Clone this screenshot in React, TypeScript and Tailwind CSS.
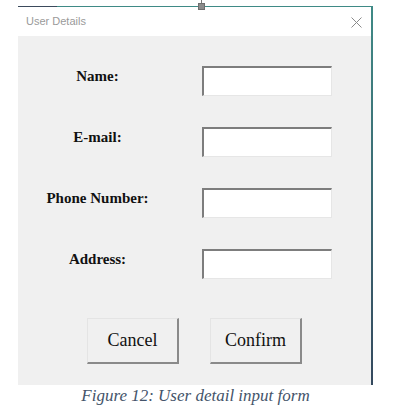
const fields = ["Name:", "E-mail:", "Phone Number:", "Address:"];

const serif = { fontFamily: '"Liberation Serif", "Times New Roman", serif' };

export default function App() {
  return (
    <div className="relative h-[411px] w-[420px] bg-white pl-[18px] pt-[6px]">
      {/* selection handle over the top edge */}
      <div className="absolute left-[201px] top-0 h-[4px] w-px bg-[#7a7a7a]" />
      <div className="absolute left-[198px] top-[3px] h-[7px] w-[7px] border border-[#6e6e6e] bg-[#8c8c8c]" />

      <div className="flex w-[355px] flex-col">
        <div className="flex h-px">
          <div className="w-[39px] bg-[#3b4a5c]" />
          <div className="flex-1 bg-[#3f8a86]" />
        </div>
        <div className="flex">
          <div className="flex flex-1 flex-col">
            <div className="flex h-[29px] items-center justify-between bg-white pl-[8px] pr-[9px]">
              <span className="text-[11px] text-[#9a9a9a]" style={{ fontFamily: '"Liberation Sans", Arial, sans-serif' }}>
                User Details
              </span>
              <svg width="11" height="11" viewBox="0 0 11 11" className="mt-px">
                <path d="M0.5 0.5 L10.5 10.5 M10.5 0.5 L0.5 10.5" stroke="#8a8a8a" strokeWidth="1" />
              </svg>
            </div>

            <div className="flex h-[349px] flex-col bg-[#f0f0f0]" style={serif}>
              <div className="mt-[30px] flex flex-col gap-[31px]">
                {fields.map((label) => (
                  <div key={label} className="flex items-center">
                    <div className="w-[159px] pb-[10px] text-center text-[15px] font-bold leading-none text-[#111]">
                      {label}
                    </div>
                    <div className="ml-[25px] h-[30px] w-[130px] border-l-2 border-t-2 border-b border-r border-b-[#e6e6e6] border-l-[#7d7d7d] border-r-[#e6e6e6] border-t-[#7d7d7d] bg-white" />
                  </div>
                ))}
              </div>

              <div className="ml-[69px] mt-[39px] flex gap-[31px]">
                {["Cancel", "Confirm"].map((b) => (
                  <button
                    key={b}
                    className="flex h-[46px] w-[92px] items-center justify-center border-b-2 border-l border-r-2 border-t border-b-[#8a8a8a] border-l-[#e4e4e4] border-r-[#8a8a8a] border-t-[#e4e4e4] bg-[#f0f0f0] text-[18px] text-[#111]"
                  >
                    {b}
                  </button>
                ))}
              </div>
            </div>
          </div>
          <div className="w-[2px] bg-linear-to-b from-[#3f8a86] to-[#34495e]" />
        </div>
        <div className="pt-[1px] text-center text-[17px] italic leading-[20px] text-[#44546a]" style={serif}>
          Figure 12: User detail input form
        </div>
      </div>
    </div>
  );
}
